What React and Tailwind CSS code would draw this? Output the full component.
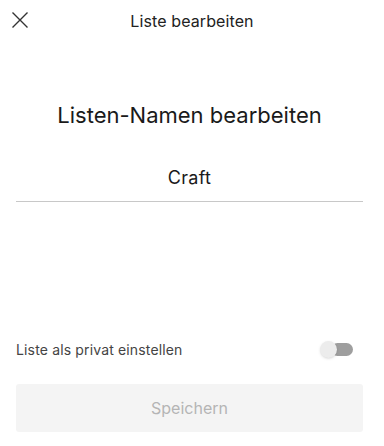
import React, { useState } from "react";

const App = () => {
  const [name, setName] = useState("Craft");
  const [isPrivate, setIsPrivate] = useState(false);

  return (
    <div
      className="w-[384px] h-[446px] bg-white flex flex-col text-[#222]"
      style={{ fontFamily: "Inter, 'Noto Sans', sans-serif" }}
    >
      {/* Header */}
      <div className="relative h-[42px] flex items-center justify-center">
        <button className="absolute left-[11px] top-[11px] text-[#333]">
          <svg width="18" height="18" viewBox="0 0 18 18" fill="none">
            <path d="M1.5 1.5L16.5 16.5M16.5 1.5L1.5 16.5" stroke="currentColor" strokeWidth="1.4" />
          </svg>
        </button>
        <p className="text-[16px] tracking-[0.1px] text-[#222]">Liste bearbeiten</p>
      </div>

      <div className="flex-1 flex flex-col ml-4 mr-[21px]">
        {/* Name */}
        <h1 className="mt-[59px] text-center text-[22px] leading-[28px] text-[#1a1a1a]">
          Listen-Namen bearbeiten
        </h1>
        <div className="mt-[37px] border-b border-[#c8c8c8]">
          <input
            value={name}
            onChange={(e) => setName(e.target.value)}
            className="w-full text-center text-[18px] leading-[24px] tracking-[0.3px] pb-[11px] outline-none bg-transparent text-[#1a1a1a]"
          />
        </div>

        <div className="flex-1" />

        {/* Private toggle */}
        <div className="flex items-center justify-between">
          <p className="text-[14px] tracking-[0.15px] text-[#444]">Liste als privat einstellen</p>
          <button
            onClick={() => setIsPrivate(!isPrivate)}
            className="relative w-[33px] h-[17px] mr-[10px]"
          >
            <span className="absolute right-0 top-[2px] w-[22px] h-[13px] rounded-full bg-[#9e9e9e]" />
            <span className="absolute left-0 top-0 w-[17px] h-[17px] rounded-full bg-[#ececec] shadow-sm" />
          </button>
        </div>

        {/* Save */}
        <button className="mt-[24px] mb-[14px] h-[48px] rounded-[3px] bg-[#f4f4f4] text-[16px] text-[#b5b5b5]">
          Speichern
        </button>
      </div>
    </div>
  );
};

export default App;
